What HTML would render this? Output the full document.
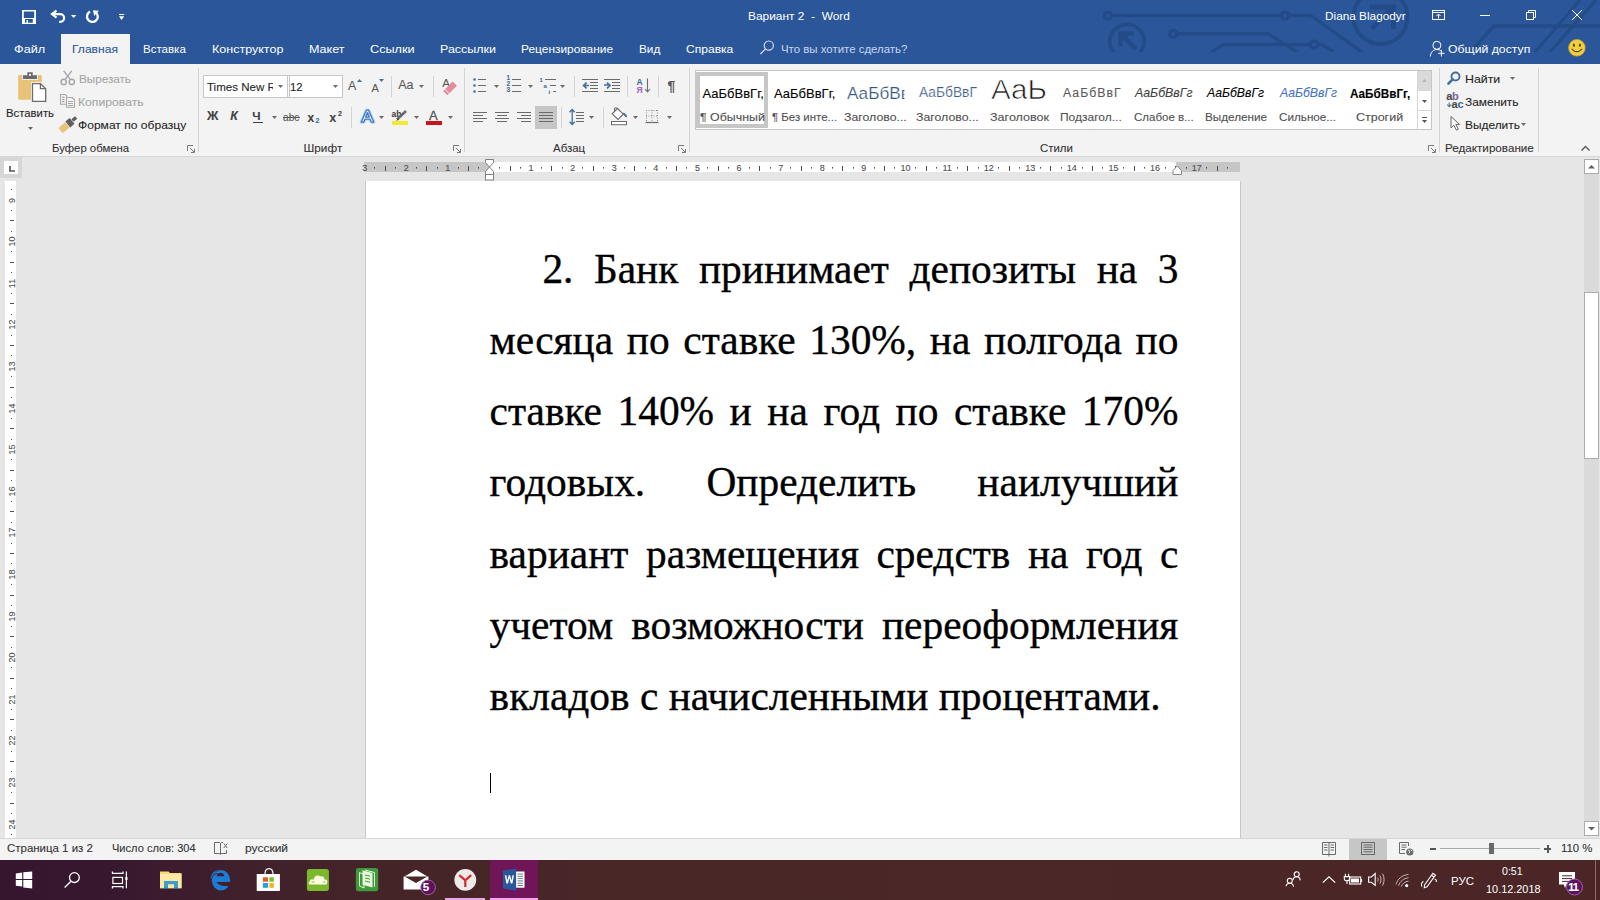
<!DOCTYPE html>
<html><head><meta charset="utf-8"><title>Word</title><style>
*{margin:0;padding:0;box-sizing:border-box}
html,body{width:1600px;height:900px;overflow:hidden;background:#e6e6e6;font-family:'Liberation Sans',sans-serif}
.b{position:absolute;display:block}
.t{position:absolute;white-space:pre;transform-origin:0 0;font-family:'Liberation Sans',sans-serif;-webkit-text-stroke:0.1px currentColor}

.doc{font-family:'Liberation Serif',serif;font-size:41.4px;color:#000;white-space:nowrap;-webkit-text-stroke:0.35px #000}
.ln{position:absolute;left:489.6px;width:688.8px;height:71px;line-height:71px;text-align:justify;text-align-last:justify;white-space:nowrap}
</style></head>
<body>
<div class="b" style="left:0px;top:0px;width:1600px;height:64px;background:#2b579a;"></div><div class="b" style="left:61px;top:34px;width:69px;height:30px;background:#f3f3f3;"></div><div class="b" style="left:0px;top:64px;width:1600px;height:92px;background:#f3f3f3;"></div><div class="b" style="left:0px;top:156px;width:1600px;height:1px;background:#d6d6d6;"></div><div class="b" style="left:0px;top:838px;width:1600px;height:1px;background:#d6d6d6;"></div><div class="b" style="left:0px;top:839px;width:1600px;height:21px;background:#f3f3f3;"></div><div class="b" style="left:0px;top:860px;width:1600px;height:40px;background:linear-gradient(90deg,#36162f 0%,#37172e 6%,#40202c 15%,#442428 22%,#4a2727 40%,#4c2627 100%);"></div><div class="b" style="left:365px;top:181px;width:876px;height:657px;background:#ffffff;border-left:1px solid #c8c8c8;border-right:1px solid #c8c8c8"></div><div class="ln doc" style="top:234.10px;padding-left:52.8px;">2. Банк принимает депозиты на 3</div><div class="ln doc" style="top:305.20px;padding-left:0px;">месяца по ставке 130%, на полгода по</div><div class="ln doc" style="top:376.30px;padding-left:0px;">ставке 140% и на год по ставке 170%</div><div class="ln doc" style="top:447.40px;padding-left:0px;">годовых. Определить наилучший</div><div class="ln doc" style="top:518.50px;padding-left:0px;">вариант размещения средств на год с</div><div class="ln doc" style="top:589.60px;padding-left:0px;">учетом возможности переоформления</div><div class="ln doc" style="top:660.70px;padding-left:0px;text-align:left;text-align-last:left;">вкладов с начисленными процентами.</div><div class="b" style="left:490px;top:773px;width:1px;height:20px;background:#000000;"></div><svg class="b" style="left:0px;top:0px;" width="1600" height="52" viewBox="0 0 1600 52"><g fill="none" stroke="#234b88" stroke-width="3.3">
<path d="M1111.2 15.5 H1281.5 M1288.5 15.5 H1308 Q1311 15.5 1313.5 17.3 L1362 52"/>
<circle cx="1107.7" cy="15.5" r="3.6"/><circle cx="1285" cy="15.5" r="3.6"/>
<path d="M1176.7 33.75 H1268 L1297 52"/><circle cx="1173.2" cy="33.75" r="3.6"/>
<path d="M1211.5 52 L1223.5 44.5 H1310.5 M1317.5 44.5 H1322 L1334 52"/><circle cx="1314" cy="44.5" r="3.6"/>
<path d="M1600 26 H1494 L1470 52"/>
<path d="M1535 52 L1580 0 M1550 52 L1596 0"/>
<circle cx="1127" cy="41.5" r="17.2" stroke-width="3.8"/>
<circle cx="1380.5" cy="17" r="27" stroke-width="4"/>
<path d="M1120.5 46 V33.5 H1134 M1121 34 L1136 49" stroke-width="4.6"/>
<path d="M1370 7 H1393.5 V29 M1393 7.5 L1372 28.5" stroke-width="5"/>
</g></svg><svg class="b" style="left:20px;top:8px;" width="110" height="18" viewBox="0 0 110 18"><g fill="#ffffff">
<path d="M2 2 H16 V16 H2 Z M3.8 3.4 V10 H14.2 V3.4 Z M5 11.1 V14.8 H6.5 V12 H8 V14.8 H12.8 V11.1 Z" fill-rule="evenodd"/>
</g>
<g fill="none" stroke="#ffffff" stroke-width="2.2">
<path d="M36.5 2.6 L32 6.1 L36.5 9.6"/>
<path d="M33 6.1 H40.2 A3.9 3.9 0 0 1 40.2 13.9 H39.2"/>
</g>
<path d="M70.1 3.6 A5.4 5.4 0 1 0 75.5 4.08" fill="none" stroke="#ffffff" stroke-width="2.3"/>
<g fill="#ffffff">
<path d="M73 2.2 L78.9 2.8 L74.2 8 Z"/>
<path d="M51 7 H56.3 L53.65 10 Z"/>
<path d="M99 6 H104.2 V7 H99 Z M99 8.3 H104.2 L101.6 12 Z"/>
</g></svg><svg class="b" style="left:758px;top:39px;" width="18" height="18" viewBox="0 0 18 18"><circle cx="10.8" cy="6.6" r="4.6" fill="none" stroke="#d0dcf0" stroke-width="1.2"/><path d="M7.5 9.9 L2.4 15" stroke="#d0dcf0" stroke-width="1.3"/></svg><svg class="b" style="left:1420px;top:0px;" width="180" height="64" viewBox="0 0 180 64"><g fill="none" stroke="#ffffff" stroke-width="1">
<rect x="12.5" y="10.5" width="12" height="9"/>
<path d="M12.5 12.5 H24.5 M18.5 18.5 V14.5 M16.5 16 L18.5 14 L20.5 16"/>
<path d="M60 15.5 H70"/>
<rect x="106.5" y="12.5" width="7" height="7"/>
<path d="M108.5 12.5 V10.5 H115.5 V17.5 H113.5"/>
<path d="M152 10 L162 20 M162 10 L152 20"/>
<circle cx="16.9" cy="45.3" r="4"/>
<path d="M10.3 56.5 C10.8 51.8 13.4 49.6 17 49.5 C18.5 49.5 19.8 49.9 20.8 50.6"/>
<path d="M21.4 50 V56.5 M18.2 53.3 H24.6"/>
</g>
<circle cx="156.9" cy="47.8" r="8.3" fill="#f2cf3f" stroke="#caa22a" stroke-width="0.8"/>
<g fill="#5a4a10"><ellipse cx="153.9" cy="45.2" rx="1.1" ry="1.6"/><ellipse cx="159.9" cy="45.2" rx="1.1" ry="1.6"/></g>
<path d="M151.6 48.8 Q156.9 54.5 162.2 48.8" fill="none" stroke="#5a4a10" stroke-width="1.1"/>
</svg><div class="b" style="left:198px;top:68px;width:1px;height:84px;background:#d4d4d4;"></div><div class="b" style="left:391px;top:76px;width:1px;height:21px;background:#d4d4d4;"></div><div class="b" style="left:351px;top:107px;width:1px;height:21px;background:#d4d4d4;"></div><div class="b" style="left:433px;top:76px;width:1px;height:21px;background:#d4d4d4;"></div><div class="b" style="left:464px;top:68px;width:1px;height:84px;background:#d4d4d4;"></div><div class="b" style="left:574px;top:76px;width:1px;height:21px;background:#d4d4d4;"></div><div class="b" style="left:627px;top:76px;width:1px;height:21px;background:#d4d4d4;"></div><div class="b" style="left:658px;top:76px;width:1px;height:21px;background:#d4d4d4;"></div><div class="b" style="left:561px;top:107px;width:1px;height:21px;background:#d4d4d4;"></div><div class="b" style="left:603px;top:107px;width:1px;height:21px;background:#d4d4d4;"></div><div class="b" style="left:689px;top:68px;width:1px;height:84px;background:#d4d4d4;"></div><div class="b" style="left:1439px;top:68px;width:1px;height:84px;background:#d4d4d4;"></div><div class="b" style="left:1538px;top:68px;width:1px;height:84px;background:#d4d4d4;"></div><svg class="b" style="left:187px;top:145px;" width="8" height="8" viewBox="0 0 8 8"><path d="M0.5 6 V0.5 H6" fill="none" stroke="#7a7a7a" stroke-width="1"/><path d="M3 3 L7 7 M7.5 4 V7.5 H4" fill="none" stroke="#7a7a7a" stroke-width="1"/></svg><svg class="b" style="left:453px;top:145px;" width="8" height="8" viewBox="0 0 8 8"><path d="M0.5 6 V0.5 H6" fill="none" stroke="#7a7a7a" stroke-width="1"/><path d="M3 3 L7 7 M7.5 4 V7.5 H4" fill="none" stroke="#7a7a7a" stroke-width="1"/></svg><svg class="b" style="left:678px;top:145px;" width="8" height="8" viewBox="0 0 8 8"><path d="M0.5 6 V0.5 H6" fill="none" stroke="#7a7a7a" stroke-width="1"/><path d="M3 3 L7 7 M7.5 4 V7.5 H4" fill="none" stroke="#7a7a7a" stroke-width="1"/></svg><svg class="b" style="left:1428px;top:145px;" width="8" height="8" viewBox="0 0 8 8"><path d="M0.5 6 V0.5 H6" fill="none" stroke="#7a7a7a" stroke-width="1"/><path d="M3 3 L7 7 M7.5 4 V7.5 H4" fill="none" stroke="#7a7a7a" stroke-width="1"/></svg><svg class="b" style="left:1580px;top:144px;" width="12" height="8" viewBox="0 0 12 8"><path d="M1.5 6.5 L5.5 2.5 L9.5 6.5" fill="none" stroke="#555" stroke-width="1.3"/></svg><svg class="b" style="left:16px;top:70px;" width="34" height="34" viewBox="0 0 34 34">
<rect x="2.2" y="4.9" width="23.6" height="24.9" rx="1" fill="#e8c277"/>
<rect x="6" y="4.3" width="15.9" height="5.6" fill="#f3f3f3"/>
<path d="M6.9 5.3 H11.3 V2.2 H16.7 V5.3 H20.9 V8.9 H6.9 Z" fill="#6b6b6b"/>
<circle cx="14" cy="4.9" r="1.1" fill="#f3f3f3"/>
<rect x="15" y="12.1" width="16.2" height="20.7" fill="#f3f3f3"/>
<path d="M16.5 13.6 H24.4 L29.7 18.7 V31.3 H16.5 Z" fill="#ffffff" stroke="#6b6b6b" stroke-width="1.3"/>
<path d="M24.4 13.6 V18.7 H29.7" fill="none" stroke="#6b6b6b" stroke-width="1.3"/>
</svg><svg class="b" style="left:28px;top:127px;" width="5" height="3" viewBox="0 0 5 3"><path d="M0 0 H5 L2.5 3 Z" fill="#6a6a6a"/></svg><svg class="b" style="left:58px;top:68px;" width="20" height="20" viewBox="0 0 20 20"><g fill="none" stroke="#a8a8a8" stroke-width="1.5">
<path d="M5.7 2.9 L12.5 11.6 M13.8 2.9 L7 11.6"/>
<circle cx="5.7" cy="13.9" r="2.6"/><circle cx="13.8" cy="13.9" r="2.6"/></g></svg><svg class="b" style="left:58px;top:92px;" width="20" height="18" viewBox="0 0 20 18"><g fill="none" stroke="#a8a8a8" stroke-width="1.1">
<path d="M2.5 2.5 H7.2 L8.6 3.9 V12.2 H2.5 Z"/>
<path d="M8.5 5.5 H14.2 L16.5 7.8 V15.2 H8.5 Z" fill="#f3f3f3"/>
<path d="M4 5.4 H6.5 M4 7.5 H6.5 M4 9.6 H6.5 M10 9.5 H15 M10 11.5 H15 M10 13.5 H15"/></g></svg><svg class="b" style="left:58px;top:113px;" width="20" height="20" viewBox="0 0 20 20"><g transform="rotate(-40 10 10)">
<path d="M-0.5 7.6 H8.4 V14.4 H-0.5 Z" fill="#e8c277"/>
<path d="M8.9 7.2 H14.4 V14.8 H8.9 Z" fill="#5f5f5f"/>
<path d="M15 9.3 H19.8 V12.7 H15 Z" fill="#5f5f5f"/>
</g></svg><div class="b" style="left:203px;top:75px;width:140px;height:23px;background:#ffffff;border:1px solid #c6c6c6"></div><div class="b" style="left:287px;top:76px;width:1px;height:21px;background:#c6c6c6;"></div><div class="b" style="left:288px;top:76px;width:1px;height:21px;background:#ffffff;"></div><div class="b" style="left:289px;top:76px;width:1px;height:21px;background:#c6c6c6;"></div><div class="b" style="left:274px;top:76px;width:12px;height:21px;background:#ffffff;"></div><svg class="b" style="left:278px;top:85px;" width="5" height="3" viewBox="0 0 5 3"><path d="M0 0 H5 L2.5 3 Z" fill="#6a6a6a"/></svg><svg class="b" style="left:333px;top:85px;" width="5" height="3" viewBox="0 0 5 3"><path d="M0 0 H5 L2.5 3 Z" fill="#6a6a6a"/></svg><div class="t" style="left:348.3px;top:79px;font-size:13px;line-height:13px;color:#595959;font-family:'Liberation Sans';transform:scaleX(0.95)">A</div><svg class="b" style="left:357px;top:79px;" width="6" height="3" viewBox="0 0 6 3"><path d="M0 3 H5 L2.5 0 Z" fill="#41719c"/></svg><div class="t" style="left:371.5px;top:82.5px;font-size:11px;line-height:11px;color:#595959;font-family:'Liberation Sans'">A</div><svg class="b" style="left:379px;top:79px;" width="5" height="3" viewBox="0 0 5 3"><path d="M0 0 H5 L2.5 3 Z" fill="#41719c"/></svg><div class="t" style="left:398.2px;top:79.4px;font-size:12.5px;line-height:12.5px;color:#595959;font-family:'Liberation Sans'">Aa</div><svg class="b" style="left:419px;top:85px;" width="5" height="3" viewBox="0 0 5 3"><path d="M0 0 H5 L2.5 3 Z" fill="#6a6a6a"/></svg><div class="t" style="left:442.3px;top:77.8px;font-size:11.5px;line-height:11.5px;color:#595959;font-family:'Liberation Sans'">A</div><svg class="b" style="left:443px;top:80px;" width="16" height="16" viewBox="0 0 16 16"><g transform="rotate(-45 8 8)"><rect x="3.2" y="4.6" width="10.5" height="6" fill="#e48b9c"/><rect x="0.3" y="4.6" width="2.2" height="6" fill="#e48b9c"/></g></svg><div class="t" style="left:206.9px;top:110.4px;font-size:12.3px;line-height:12.3px;color:#444;font-weight:bold;font-family:'Liberation Sans';transform:scaleX(1.02)">Ж</div><div class="t" style="left:230.2px;top:110.4px;font-size:12.3px;line-height:12.3px;color:#444;font-weight:bold;font-style:italic;font-family:'Liberation Sans'">К</div><div class="t" style="left:252.2px;top:110.9px;font-size:11.8px;line-height:11.8px;color:#444;font-weight:bold;font-family:'Liberation Sans'">Ч</div><div class="b" style="left:253px;top:122px;width:10px;height:1px;background:#444;"></div><svg class="b" style="left:272px;top:116px;" width="5" height="3" viewBox="0 0 5 3"><path d="M0 0 H5 L2.5 3 Z" fill="#6a6a6a"/></svg><div class="t" style="left:283.2px;top:111.5px;font-size:11px;line-height:11px;color:#555;font-family:'Liberation Sans';transform:scaleX(0.92)">abc</div><div class="b" style="left:283px;top:117px;width:17px;height:1px;background:#555;"></div><div class="t" style="left:307.5px;top:111.5px;font-size:12px;line-height:12px;color:#444;font-weight:bold;font-family:'Liberation Sans'">x</div><div class="t" style="left:315.5px;top:117px;font-size:7px;line-height:7px;color:#41719c;font-weight:bold;font-family:'Liberation Sans'">2</div><div class="t" style="left:329.5px;top:111.5px;font-size:12px;line-height:12px;color:#444;font-weight:bold;font-family:'Liberation Sans'">x</div><div class="t" style="left:338px;top:110px;font-size:7px;line-height:7px;color:#444;font-weight:bold;font-family:'Liberation Sans'">2</div><svg class="b" style="left:357px;top:107px;" width="20" height="19" viewBox="0 0 20 19"><path d="M4.2 15.2 L9.4 3.2 H11.6 L16.8 15.2 H14.3 L13.1 12.2 H7.9 L6.7 15.2 Z M8.7 10.1 H12.3 L10.5 5.6 Z" fill="#e6f0fa" fill-rule="evenodd" stroke="#bcd4ee" stroke-width="3.2" stroke-linejoin="round"/><path d="M4.2 15.2 L9.4 3.2 H11.6 L16.8 15.2 H14.3 L13.1 12.2 H7.9 L6.7 15.2 Z M8.7 10.1 H12.3 L10.5 5.6 Z" fill="#f4f8fd" fill-rule="evenodd" stroke="#3d78c0" stroke-width="1.3" stroke-linejoin="round"/></svg><svg class="b" style="left:379px;top:116px;" width="5" height="3" viewBox="0 0 5 3"><path d="M0 0 H5 L2.5 3 Z" fill="#6a6a6a"/></svg><div class="t" style="left:391.5px;top:109.5px;font-size:8.5px;line-height:8.5px;color:#444;font-weight:bold;font-family:'Liberation Sans'">ab</div><svg class="b" style="left:394px;top:109px;" width="16" height="13" viewBox="0 0 16 13"><path d="M3 10.5 L12 2" stroke="#6a6a6a" stroke-width="2.6"/><path d="M2 12 L4 9.5 L5 10.6 Z" fill="#333"/></svg><div class="b" style="left:392px;top:121px;width:16px;height:4px;background:#f2ea2c;"></div><svg class="b" style="left:414px;top:116px;" width="5" height="3" viewBox="0 0 5 3"><path d="M0 0 H5 L2.5 3 Z" fill="#6a6a6a"/></svg><div class="t" style="left:428.9px;top:109.4px;font-size:13px;line-height:13px;color:#555;font-family:'Liberation Sans';-webkit-text-stroke:0.3px #555">A</div><div class="b" style="left:426px;top:121px;width:16px;height:4px;background:#c8151b;"></div><svg class="b" style="left:448px;top:116px;" width="5" height="3" viewBox="0 0 5 3"><path d="M0 0 H5 L2.5 3 Z" fill="#6a6a6a"/></svg><svg class="b" style="left:473px;top:78px;" width="3" height="3" viewBox="0 0 3 3"><circle cx="1.5" cy="1.5" r="1.3" fill="#41719c"/></svg><div class="b" style="left:478px;top:79px;width:8px;height:1px;background:#6a6a6a;"></div><svg class="b" style="left:473px;top:84px;" width="3" height="3" viewBox="0 0 3 3"><circle cx="1.5" cy="1.5" r="1.3" fill="#41719c"/></svg><div class="b" style="left:478px;top:85px;width:8px;height:1px;background:#6a6a6a;"></div><svg class="b" style="left:473px;top:90px;" width="3" height="3" viewBox="0 0 3 3"><circle cx="1.5" cy="1.5" r="1.3" fill="#41719c"/></svg><div class="b" style="left:478px;top:91px;width:8px;height:1px;background:#6a6a6a;"></div><svg class="b" style="left:494px;top:85px;" width="5" height="3" viewBox="0 0 5 3"><path d="M0 0 H5 L2.5 3 Z" fill="#6a6a6a"/></svg><div class="t" style="left:506.5px;top:75px;font-size:6.5px;line-height:6.5px;color:#41719c;font-weight:bold;font-family:'Liberation Sans'">1</div><div class="b" style="left:512px;top:79px;width:9px;height:1px;background:#6a6a6a;"></div><div class="t" style="left:506.5px;top:81px;font-size:6.5px;line-height:6.5px;color:#41719c;font-weight:bold;font-family:'Liberation Sans'">2</div><div class="b" style="left:512px;top:85px;width:9px;height:1px;background:#6a6a6a;"></div><div class="t" style="left:506.5px;top:87px;font-size:6.5px;line-height:6.5px;color:#41719c;font-weight:bold;font-family:'Liberation Sans'">3</div><div class="b" style="left:512px;top:91px;width:9px;height:1px;background:#6a6a6a;"></div><svg class="b" style="left:528px;top:85px;" width="5" height="3" viewBox="0 0 5 3"><path d="M0 0 H5 L2.5 3 Z" fill="#6a6a6a"/></svg><div class="t" style="left:539.5px;top:77px;font-size:6px;line-height:6px;color:#41719c;font-weight:bold;font-family:'Liberation Sans'">1</div><div class="t" style="left:543.5px;top:82.5px;font-size:6px;line-height:6px;color:#41719c;font-weight:bold;font-family:'Liberation Sans'">a</div><div class="t" style="left:548.5px;top:88.5px;font-size:6px;line-height:6px;color:#41719c;font-weight:bold;font-family:'Liberation Sans'">i</div><div class="b" style="left:545px;top:79px;width:11px;height:1px;background:#6a6a6a;"></div><div class="b" style="left:550px;top:85px;width:6px;height:1px;background:#6a6a6a;"></div><div class="b" style="left:553px;top:91px;width:3px;height:1px;background:#6a6a6a;"></div><svg class="b" style="left:560px;top:85px;" width="5" height="3" viewBox="0 0 5 3"><path d="M0 0 H5 L2.5 3 Z" fill="#6a6a6a"/></svg><div class="b" style="left:582px;top:79px;width:16px;height:1px;background:#6a6a6a;"></div><div class="b" style="left:582px;top:91px;width:16px;height:1px;background:#6a6a6a;"></div><div class="b" style="left:590px;top:82px;width:8px;height:1px;background:#6a6a6a;"></div><div class="b" style="left:590px;top:85px;width:8px;height:1px;background:#6a6a6a;"></div><div class="b" style="left:590px;top:88px;width:8px;height:1px;background:#6a6a6a;"></div><svg class="b" style="left:582px;top:82px;" width="8" height="7" viewBox="0 0 8 7"><path d="M7 3.5 H2.5 M4.6 0.6 L1.6 3.5 L4.6 6.4" fill="none" stroke="#41719c" stroke-width="1.7"/></svg><div class="b" style="left:604px;top:79px;width:16px;height:1px;background:#6a6a6a;"></div><div class="b" style="left:604px;top:91px;width:16px;height:1px;background:#6a6a6a;"></div><div class="b" style="left:612px;top:82px;width:8px;height:1px;background:#6a6a6a;"></div><div class="b" style="left:612px;top:85px;width:8px;height:1px;background:#6a6a6a;"></div><div class="b" style="left:612px;top:88px;width:8px;height:1px;background:#6a6a6a;"></div><svg class="b" style="left:604px;top:82px;" width="8" height="7" viewBox="0 0 8 7"><path d="M0 3 H4.5 M3 0.6 L6 3.5 L3 6.4" fill="none" stroke="#41719c" stroke-width="1.7"/></svg><div class="t" style="left:636.5px;top:77.5px;font-size:8.5px;line-height:8.5px;color:#41719c;font-weight:bold;font-family:'Liberation Sans'">A</div><div class="t" style="left:636.5px;top:85.5px;font-size:8.5px;line-height:8.5px;color:#a566c9;font-weight:bold;font-family:'Liberation Sans'">Я</div><svg class="b" style="left:644px;top:78px;" width="8" height="16" viewBox="0 0 8 16"><path d="M3.5 0.5 V14 M1 11 L3.5 14 L6 11" fill="none" stroke="#6a6a6a" stroke-width="1.1"/></svg><div class="t" style="left:667.5px;top:79px;font-size:14px;line-height:14px;color:#595959;font-weight:bold;font-family:'Liberation Sans'">¶</div><div class="b" style="left:535px;top:106px;width:22px;height:23px;background:#c6c6c6;"></div><div class="b" style="left:473px;top:112px;width:14px;height:1px;background:#6a6a6a;"></div><div class="b" style="left:495px;top:112px;width:14px;height:1px;background:#6a6a6a;"></div><div class="b" style="left:517px;top:112px;width:14px;height:1px;background:#6a6a6a;"></div><div class="b" style="left:539px;top:112px;width:14px;height:1px;background:#6a6a6a;"></div><div class="b" style="left:473px;top:115px;width:10px;height:1px;background:#6a6a6a;"></div><div class="b" style="left:497px;top:115px;width:10px;height:1px;background:#6a6a6a;"></div><div class="b" style="left:521px;top:115px;width:10px;height:1px;background:#6a6a6a;"></div><div class="b" style="left:539px;top:115px;width:14px;height:1px;background:#6a6a6a;"></div><div class="b" style="left:473px;top:118px;width:14px;height:1px;background:#6a6a6a;"></div><div class="b" style="left:495px;top:118px;width:14px;height:1px;background:#6a6a6a;"></div><div class="b" style="left:517px;top:118px;width:14px;height:1px;background:#6a6a6a;"></div><div class="b" style="left:539px;top:118px;width:14px;height:1px;background:#6a6a6a;"></div><div class="b" style="left:473px;top:121px;width:10px;height:1px;background:#6a6a6a;"></div><div class="b" style="left:497px;top:121px;width:10px;height:1px;background:#6a6a6a;"></div><div class="b" style="left:521px;top:121px;width:10px;height:1px;background:#6a6a6a;"></div><div class="b" style="left:539px;top:121px;width:14px;height:1px;background:#6a6a6a;"></div><svg class="b" style="left:568px;top:108px;" width="9" height="19" viewBox="0 0 9 19"><path d="M4.2 1.5 V16.5 M1.6 4.3 L4.2 1.5 L6.8 4.3 M1.6 13.7 L4.2 16.5 L6.8 13.7" fill="none" stroke="#41719c" stroke-width="1.3"/></svg><div class="b" style="left:576px;top:112px;width:8px;height:1px;background:#6a6a6a;"></div><div class="b" style="left:576px;top:115px;width:8px;height:1px;background:#6a6a6a;"></div><div class="b" style="left:576px;top:118px;width:8px;height:1px;background:#6a6a6a;"></div><div class="b" style="left:576px;top:121px;width:8px;height:1px;background:#6a6a6a;"></div><svg class="b" style="left:589px;top:116px;" width="5" height="3" viewBox="0 0 5 3"><path d="M0 0 H5 L2.5 3 Z" fill="#6a6a6a"/></svg><svg class="b" style="left:609px;top:107px;" width="20" height="20" viewBox="0 0 20 20"><path d="M8.5 1.5 L14.3 7.2 L9 12.5 L3.2 6.8 Z" fill="#fff" stroke="#6a6a6a" stroke-width="1.1"/>
<path d="M5.5 4.3 V1 H8.5" fill="none" stroke="#6a6a6a" stroke-width="1"/>
<path d="M14.5 6 C16.5 6.5 17.5 8.5 17.5 10 C16 9.5 15 8.5 14.5 6 Z" fill="#41719c" stroke="#41719c" stroke-width="1"/>
<rect x="2.5" y="14.5" width="15" height="3.2" fill="#fff" stroke="#6a6a6a" stroke-width="1"/></svg><svg class="b" style="left:633px;top:116px;" width="5" height="3" viewBox="0 0 5 3"><path d="M0 0 H5 L2.5 3 Z" fill="#6a6a6a"/></svg><svg class="b" style="left:645px;top:109px;" width="15" height="15" viewBox="0 0 15 15"><path d="M1.5 1 V13 M7 1 V13 M12.5 1 V13 M1 1.5 H13 M1 7 H13" fill="none" stroke="#8a8a8a" stroke-width="1" stroke-dasharray="1 1.5"/>
<path d="M0.5 13.5 H13.5" stroke="#6a6a6a" stroke-width="1.2"/></svg><svg class="b" style="left:667px;top:116px;" width="5" height="3" viewBox="0 0 5 3"><path d="M0 0 H5 L2.5 3 Z" fill="#6a6a6a"/></svg><div class="b" style="left:695px;top:70px;width:737px;height:60px;background:#ffffff;border:1px solid #c6c6c6"></div><div class="b" style="left:696px;top:72px;width:72px;height:56px;background:transparent;border:4px solid #c6c6c6"></div><div class="b" style="left:1417px;top:71px;width:14px;height:58px;background:#ffffff;border-left:1px solid #d6d6d6"></div><div class="b" style="left:1418px;top:71px;width:13px;height:20px;background:#dadada;"></div><div class="b" style="left:1418px;top:110px;width:13px;height:1px;background:#d6d6d6;"></div><svg class="b" style="left:1422px;top:79px;" width="6" height="3" viewBox="0 0 6 3"><path d="M0 3 H5 L2.5 0 Z" fill="#b5b5b5"/></svg><svg class="b" style="left:1422px;top:100px;" width="5" height="3" viewBox="0 0 5 3"><path d="M0 0 H5 L2.5 3 Z" fill="#555"/></svg><div class="b" style="left:1422px;top:117px;width:5px;height:1px;background:#555;"></div><svg class="b" style="left:1422px;top:119.5px;" width="5" height="3" viewBox="0 0 5 3"><path d="M0 0 H5 L2.5 3 Z" fill="#555"/></svg><svg class="b" style="left:1445px;top:70px;" width="20" height="16" viewBox="0 0 20 16"><circle cx="10.5" cy="6.5" r="4" fill="none" stroke="#41719c" stroke-width="1.9"/><path d="M7.6 9.4 L3.4 13.6" stroke="#41719c" stroke-width="2.6" stroke-linecap="round"/></svg><svg class="b" style="left:1510px;top:77px;" width="5" height="3" viewBox="0 0 5 3"><path d="M0 0 H5 L2.5 3 Z" fill="#6a6a6a"/></svg><div class="t" style="left:1446.2px;top:91.2px;font-size:11px;line-height:11px;color:#4a4a4a;font-weight:bold;font-family:'Liberation Sans';letter-spacing:-0.3px"><span>a</span><span style="color:#7d62a0">b</span></div><div class="t" style="left:1451.6px;top:98.6px;font-size:11px;line-height:11px;color:#4a4a4a;font-weight:bold;font-family:'Liberation Sans';letter-spacing:-0.3px"><span>a</span><span style="color:#46698f">c</span></div><svg class="b" style="left:1446px;top:102px;" width="6" height="6" viewBox="0 0 6 6"><path d="M3.2 0.6 V4.4 M1.2 2.6 L3.2 4.6 L5.2 2.6" fill="none" stroke="#3f7f94" stroke-width="1.1"/></svg><svg class="b" style="left:1449px;top:115px;" width="13" height="17" viewBox="0 0 13 17"><path d="M2 1.5 V13 L4.8 10.2 L7.5 15.2 L9.3 14.2 L6.8 9.4 L10.5 9.4 Z" fill="#fff" stroke="#666" stroke-width="1"/></svg><svg class="b" style="left:1521px;top:123px;" width="5" height="3" viewBox="0 0 5 3"><path d="M0 0 H5 L2.5 3 Z" fill="#6a6a6a"/></svg><div class="b" style="left:364px;top:162px;width:876px;height:10px;background:#c6c6c6;"></div><div class="b" style="left:489px;top:162px;width:687px;height:10px;background:#ffffff;"></div><svg class="b" style="left:364px;top:162px;" width="876" height="10" viewBox="0 0 876 10"><rect x="10" y="5" width="1" height="1.6" fill="#4f4f4f"/><rect x="21" y="4" width="1" height="5" fill="#4f4f4f"/><rect x="31" y="5" width="1" height="1.6" fill="#4f4f4f"/><rect x="52" y="5" width="1" height="1.6" fill="#4f4f4f"/><rect x="62" y="4" width="1" height="5" fill="#4f4f4f"/><rect x="73" y="5" width="1" height="1.6" fill="#4f4f4f"/><rect x="94" y="5" width="1" height="1.6" fill="#4f4f4f"/><rect x="104" y="4" width="1" height="5" fill="#4f4f4f"/><rect x="114" y="5" width="1" height="1.6" fill="#4f4f4f"/><rect x="135" y="5" width="1" height="1.6" fill="#4f4f4f"/><rect x="146" y="4" width="1" height="5" fill="#4f4f4f"/><rect x="156" y="5" width="1" height="1.6" fill="#4f4f4f"/><rect x="177" y="5" width="1" height="1.6" fill="#4f4f4f"/><rect x="187" y="4" width="1" height="5" fill="#4f4f4f"/><rect x="198" y="5" width="1" height="1.6" fill="#4f4f4f"/><rect x="218" y="5" width="1" height="1.6" fill="#4f4f4f"/><rect x="229" y="4" width="1" height="5" fill="#4f4f4f"/><rect x="239" y="5" width="1" height="1.6" fill="#4f4f4f"/><rect x="260" y="5" width="1" height="1.6" fill="#4f4f4f"/><rect x="270" y="4" width="1" height="5" fill="#4f4f4f"/><rect x="281" y="5" width="1" height="1.6" fill="#4f4f4f"/><rect x="302" y="5" width="1" height="1.6" fill="#4f4f4f"/><rect x="312" y="4" width="1" height="5" fill="#4f4f4f"/><rect x="322" y="5" width="1" height="1.6" fill="#4f4f4f"/><rect x="343" y="5" width="1" height="1.6" fill="#4f4f4f"/><rect x="354" y="4" width="1" height="5" fill="#4f4f4f"/><rect x="364" y="5" width="1" height="1.6" fill="#4f4f4f"/><rect x="385" y="5" width="1" height="1.6" fill="#4f4f4f"/><rect x="395" y="4" width="1" height="5" fill="#4f4f4f"/><rect x="406" y="5" width="1" height="1.6" fill="#4f4f4f"/><rect x="426" y="5" width="1" height="1.6" fill="#4f4f4f"/><rect x="437" y="4" width="1" height="5" fill="#4f4f4f"/><rect x="447" y="5" width="1" height="1.6" fill="#4f4f4f"/><rect x="468" y="5" width="1" height="1.6" fill="#4f4f4f"/><rect x="478" y="4" width="1" height="5" fill="#4f4f4f"/><rect x="489" y="5" width="1" height="1.6" fill="#4f4f4f"/><rect x="510" y="5" width="1" height="1.6" fill="#4f4f4f"/><rect x="520" y="4" width="1" height="5" fill="#4f4f4f"/><rect x="530" y="5" width="1" height="1.6" fill="#4f4f4f"/><rect x="551" y="5" width="1" height="1.6" fill="#4f4f4f"/><rect x="562" y="4" width="1" height="5" fill="#4f4f4f"/><rect x="572" y="5" width="1" height="1.6" fill="#4f4f4f"/><rect x="593" y="5" width="1" height="1.6" fill="#4f4f4f"/><rect x="603" y="4" width="1" height="5" fill="#4f4f4f"/><rect x="614" y="5" width="1" height="1.6" fill="#4f4f4f"/><rect x="634" y="5" width="1" height="1.6" fill="#4f4f4f"/><rect x="645" y="4" width="1" height="5" fill="#4f4f4f"/><rect x="655" y="5" width="1" height="1.6" fill="#4f4f4f"/><rect x="676" y="5" width="1" height="1.6" fill="#4f4f4f"/><rect x="686" y="4" width="1" height="5" fill="#4f4f4f"/><rect x="697" y="5" width="1" height="1.6" fill="#4f4f4f"/><rect x="718" y="5" width="1" height="1.6" fill="#4f4f4f"/><rect x="728" y="4" width="1" height="5" fill="#4f4f4f"/><rect x="738" y="5" width="1" height="1.6" fill="#4f4f4f"/><rect x="759" y="5" width="1" height="1.6" fill="#4f4f4f"/><rect x="770" y="4" width="1" height="5" fill="#4f4f4f"/><rect x="780" y="5" width="1" height="1.6" fill="#4f4f4f"/><rect x="801" y="5" width="1" height="1.6" fill="#4f4f4f"/><rect x="811" y="4" width="1" height="5" fill="#4f4f4f"/><rect x="822" y="5" width="1" height="1.6" fill="#4f4f4f"/><rect x="842" y="5" width="1" height="1.6" fill="#4f4f4f"/><rect x="853" y="4" width="1" height="5" fill="#4f4f4f"/><rect x="863" y="5" width="1" height="1.6" fill="#4f4f4f"/></svg><div class="t" style="left:361.65px;top:164.1px;width:6px;text-align:center;font-size:9px;line-height:9px;color:#4f4f4f;font-family:'Liberation Sans',sans-serif">3</div><div class="t" style="left:403.25px;top:164.1px;width:6px;text-align:center;font-size:9px;line-height:9px;color:#4f4f4f;font-family:'Liberation Sans',sans-serif">2</div><div class="t" style="left:444.85px;top:164.1px;width:6px;text-align:center;font-size:9px;line-height:9px;color:#4f4f4f;font-family:'Liberation Sans',sans-serif">1</div><div class="t" style="left:528.05px;top:164.1px;width:6px;text-align:center;font-size:9px;line-height:9px;color:#4f4f4f;font-family:'Liberation Sans',sans-serif">1</div><div class="t" style="left:569.65px;top:164.1px;width:6px;text-align:center;font-size:9px;line-height:9px;color:#4f4f4f;font-family:'Liberation Sans',sans-serif">2</div><div class="t" style="left:611.25px;top:164.1px;width:6px;text-align:center;font-size:9px;line-height:9px;color:#4f4f4f;font-family:'Liberation Sans',sans-serif">3</div><div class="t" style="left:652.85px;top:164.1px;width:6px;text-align:center;font-size:9px;line-height:9px;color:#4f4f4f;font-family:'Liberation Sans',sans-serif">4</div><div class="t" style="left:694.45px;top:164.1px;width:6px;text-align:center;font-size:9px;line-height:9px;color:#4f4f4f;font-family:'Liberation Sans',sans-serif">5</div><div class="t" style="left:736.05px;top:164.1px;width:6px;text-align:center;font-size:9px;line-height:9px;color:#4f4f4f;font-family:'Liberation Sans',sans-serif">6</div><div class="t" style="left:777.65px;top:164.1px;width:6px;text-align:center;font-size:9px;line-height:9px;color:#4f4f4f;font-family:'Liberation Sans',sans-serif">7</div><div class="t" style="left:819.25px;top:164.1px;width:6px;text-align:center;font-size:9px;line-height:9px;color:#4f4f4f;font-family:'Liberation Sans',sans-serif">8</div><div class="t" style="left:860.85px;top:164.1px;width:6px;text-align:center;font-size:9px;line-height:9px;color:#4f4f4f;font-family:'Liberation Sans',sans-serif">9</div><div class="t" style="left:899.95px;top:164.1px;width:11px;text-align:center;font-size:9px;line-height:9px;color:#4f4f4f;font-family:'Liberation Sans',sans-serif">10</div><div class="t" style="left:941.55px;top:164.1px;width:11px;text-align:center;font-size:9px;line-height:9px;color:#4f4f4f;font-family:'Liberation Sans',sans-serif">11</div><div class="t" style="left:983.15px;top:164.1px;width:11px;text-align:center;font-size:9px;line-height:9px;color:#4f4f4f;font-family:'Liberation Sans',sans-serif">12</div><div class="t" style="left:1024.75px;top:164.1px;width:11px;text-align:center;font-size:9px;line-height:9px;color:#4f4f4f;font-family:'Liberation Sans',sans-serif">13</div><div class="t" style="left:1066.35px;top:164.1px;width:11px;text-align:center;font-size:9px;line-height:9px;color:#4f4f4f;font-family:'Liberation Sans',sans-serif">14</div><div class="t" style="left:1107.95px;top:164.1px;width:11px;text-align:center;font-size:9px;line-height:9px;color:#4f4f4f;font-family:'Liberation Sans',sans-serif">15</div><div class="t" style="left:1149.55px;top:164.1px;width:11px;text-align:center;font-size:9px;line-height:9px;color:#4f4f4f;font-family:'Liberation Sans',sans-serif">16</div><div class="t" style="left:1191.15px;top:164.1px;width:11px;text-align:center;font-size:9px;line-height:9px;color:#4f4f4f;font-family:'Liberation Sans',sans-serif">17</div><svg class="b" style="left:484px;top:158px;" width="11" height="24" viewBox="0 0 11 24"><g fill="#ffffff" stroke="#808080" stroke-width="1">
<path d="M1.5 1.5 H9.5 V4.5 L5.5 9 L9.5 13.5 V16.5 H1.5 V13.5 L5.5 9 L1.5 4.5 Z"/>
<rect x="1.5" y="16.5" width="8" height="5.5"/></g></svg><svg class="b" style="left:1172px;top:165px;" width="11" height="11" viewBox="0 0 11 11"><path d="M5.25 1 L9.5 5.5 V9.5 H1 V5.5 Z" fill="#fff" stroke="#8a8a8a" stroke-width="1"/></svg><div class="b" style="left:0px;top:157px;width:22px;height:21px;background:#d6d6d6;"></div><div class="b" style="left:4px;top:161px;width:14px;height:13px;background:#ffffff;"></div><svg class="b" style="left:4px;top:161px;" width="14" height="13" viewBox="0 0 14 13"><path d="M6 5 V10 H11" fill="none" stroke="#555" stroke-width="1.7"/></svg><div class="b" style="left:5px;top:181px;width:11px;height:657px;background:#ffffff;"></div><svg class="b" style="left:5px;top:181px;" width="11" height="657" viewBox="0 0 11 657"><rect x="6" y="8" width="1" height="1" fill="#4f4f4f"/><rect x="6" y="29" width="1" height="1" fill="#4f4f4f"/><rect x="5" y="39" width="4" height="1" fill="#4f4f4f"/><rect x="6" y="50" width="1" height="1" fill="#4f4f4f"/><rect x="6" y="70" width="1" height="1" fill="#4f4f4f"/><rect x="5" y="81" width="4" height="1" fill="#4f4f4f"/><rect x="6" y="91" width="1" height="1" fill="#4f4f4f"/><rect x="6" y="112" width="1" height="1" fill="#4f4f4f"/><rect x="5" y="122" width="4" height="1" fill="#4f4f4f"/><rect x="6" y="133" width="1" height="1" fill="#4f4f4f"/><rect x="6" y="154" width="1" height="1" fill="#4f4f4f"/><rect x="5" y="164" width="4" height="1" fill="#4f4f4f"/><rect x="6" y="174" width="1" height="1" fill="#4f4f4f"/><rect x="6" y="195" width="1" height="1" fill="#4f4f4f"/><rect x="5" y="206" width="4" height="1" fill="#4f4f4f"/><rect x="6" y="216" width="1" height="1" fill="#4f4f4f"/><rect x="6" y="237" width="1" height="1" fill="#4f4f4f"/><rect x="5" y="247" width="4" height="1" fill="#4f4f4f"/><rect x="6" y="258" width="1" height="1" fill="#4f4f4f"/><rect x="6" y="278" width="1" height="1" fill="#4f4f4f"/><rect x="5" y="289" width="4" height="1" fill="#4f4f4f"/><rect x="6" y="299" width="1" height="1" fill="#4f4f4f"/><rect x="6" y="320" width="1" height="1" fill="#4f4f4f"/><rect x="5" y="330" width="4" height="1" fill="#4f4f4f"/><rect x="6" y="341" width="1" height="1" fill="#4f4f4f"/><rect x="6" y="362" width="1" height="1" fill="#4f4f4f"/><rect x="5" y="372" width="4" height="1" fill="#4f4f4f"/><rect x="6" y="382" width="1" height="1" fill="#4f4f4f"/><rect x="6" y="403" width="1" height="1" fill="#4f4f4f"/><rect x="5" y="414" width="4" height="1" fill="#4f4f4f"/><rect x="6" y="424" width="1" height="1" fill="#4f4f4f"/><rect x="6" y="445" width="1" height="1" fill="#4f4f4f"/><rect x="5" y="455" width="4" height="1" fill="#4f4f4f"/><rect x="6" y="466" width="1" height="1" fill="#4f4f4f"/><rect x="6" y="486" width="1" height="1" fill="#4f4f4f"/><rect x="5" y="497" width="4" height="1" fill="#4f4f4f"/><rect x="6" y="507" width="1" height="1" fill="#4f4f4f"/><rect x="6" y="528" width="1" height="1" fill="#4f4f4f"/><rect x="5" y="538" width="4" height="1" fill="#4f4f4f"/><rect x="6" y="549" width="1" height="1" fill="#4f4f4f"/><rect x="6" y="570" width="1" height="1" fill="#4f4f4f"/><rect x="5" y="580" width="4" height="1" fill="#4f4f4f"/><rect x="6" y="590" width="1" height="1" fill="#4f4f4f"/><rect x="6" y="611" width="1" height="1" fill="#4f4f4f"/><rect x="5" y="622" width="4" height="1" fill="#4f4f4f"/><rect x="6" y="632" width="1" height="1" fill="#4f4f4f"/><rect x="6" y="653" width="1" height="1" fill="#4f4f4f"/></svg><div class="t" style="left:-3.20px;top:195.50px;width:30px;text-align:center;font-size:9px;line-height:9px;color:#4f4f4f;transform:rotate(-90deg);transform-origin:15px 4.5px;font-family:'Liberation Sans',sans-serif">9</div><div class="t" style="left:-3.20px;top:237.10px;width:30px;text-align:center;font-size:9px;line-height:9px;color:#4f4f4f;transform:rotate(-90deg);transform-origin:15px 4.5px;font-family:'Liberation Sans',sans-serif">10</div><div class="t" style="left:-3.20px;top:278.70px;width:30px;text-align:center;font-size:9px;line-height:9px;color:#4f4f4f;transform:rotate(-90deg);transform-origin:15px 4.5px;font-family:'Liberation Sans',sans-serif">11</div><div class="t" style="left:-3.20px;top:320.30px;width:30px;text-align:center;font-size:9px;line-height:9px;color:#4f4f4f;transform:rotate(-90deg);transform-origin:15px 4.5px;font-family:'Liberation Sans',sans-serif">12</div><div class="t" style="left:-3.20px;top:361.90px;width:30px;text-align:center;font-size:9px;line-height:9px;color:#4f4f4f;transform:rotate(-90deg);transform-origin:15px 4.5px;font-family:'Liberation Sans',sans-serif">13</div><div class="t" style="left:-3.20px;top:403.50px;width:30px;text-align:center;font-size:9px;line-height:9px;color:#4f4f4f;transform:rotate(-90deg);transform-origin:15px 4.5px;font-family:'Liberation Sans',sans-serif">14</div><div class="t" style="left:-3.20px;top:445.10px;width:30px;text-align:center;font-size:9px;line-height:9px;color:#4f4f4f;transform:rotate(-90deg);transform-origin:15px 4.5px;font-family:'Liberation Sans',sans-serif">15</div><div class="t" style="left:-3.20px;top:486.70px;width:30px;text-align:center;font-size:9px;line-height:9px;color:#4f4f4f;transform:rotate(-90deg);transform-origin:15px 4.5px;font-family:'Liberation Sans',sans-serif">16</div><div class="t" style="left:-3.20px;top:528.30px;width:30px;text-align:center;font-size:9px;line-height:9px;color:#4f4f4f;transform:rotate(-90deg);transform-origin:15px 4.5px;font-family:'Liberation Sans',sans-serif">17</div><div class="t" style="left:-3.20px;top:569.90px;width:30px;text-align:center;font-size:9px;line-height:9px;color:#4f4f4f;transform:rotate(-90deg);transform-origin:15px 4.5px;font-family:'Liberation Sans',sans-serif">18</div><div class="t" style="left:-3.20px;top:611.50px;width:30px;text-align:center;font-size:9px;line-height:9px;color:#4f4f4f;transform:rotate(-90deg);transform-origin:15px 4.5px;font-family:'Liberation Sans',sans-serif">19</div><div class="t" style="left:-3.20px;top:653.10px;width:30px;text-align:center;font-size:9px;line-height:9px;color:#4f4f4f;transform:rotate(-90deg);transform-origin:15px 4.5px;font-family:'Liberation Sans',sans-serif">20</div><div class="t" style="left:-3.20px;top:694.70px;width:30px;text-align:center;font-size:9px;line-height:9px;color:#4f4f4f;transform:rotate(-90deg);transform-origin:15px 4.5px;font-family:'Liberation Sans',sans-serif">21</div><div class="t" style="left:-3.20px;top:736.30px;width:30px;text-align:center;font-size:9px;line-height:9px;color:#4f4f4f;transform:rotate(-90deg);transform-origin:15px 4.5px;font-family:'Liberation Sans',sans-serif">22</div><div class="t" style="left:-3.20px;top:777.90px;width:30px;text-align:center;font-size:9px;line-height:9px;color:#4f4f4f;transform:rotate(-90deg);transform-origin:15px 4.5px;font-family:'Liberation Sans',sans-serif">23</div><div class="t" style="left:-3.20px;top:819.50px;width:30px;text-align:center;font-size:9px;line-height:9px;color:#4f4f4f;transform:rotate(-90deg);transform-origin:15px 4.5px;font-family:'Liberation Sans',sans-serif">24</div><div class="b" style="left:1584px;top:174px;width:15px;height:647px;background:#dadada;"></div><div class="b" style="left:1584px;top:159px;width:15px;height:15px;background:#ffffff;border:1px solid #ababab"></div><svg class="b" style="left:1584px;top:159px;" width="15" height="15" viewBox="0 0 15 15"><path d="M4 9.5 H11 L7.5 6 Z" fill="#606060"/></svg><div class="b" style="left:1584px;top:292px;width:15px;height:167px;background:#ffffff;border:1px solid #ababab"></div><div class="b" style="left:1584px;top:821px;width:15px;height:15px;background:#ffffff;border:1px solid #ababab"></div><svg class="b" style="left:1584px;top:821px;" width="15" height="15" viewBox="0 0 15 15"><path d="M4 6 H11 L7.5 9.5 Z" fill="#606060"/></svg><svg class="b" style="left:212px;top:841px;" width="18" height="15" viewBox="0 0 18 15"><g fill="none" stroke="#6a6a6a" stroke-width="1">
<path d="M2.5 1.5 H7 C8 1.5 8.5 2 8.5 3 V13.5 C8.5 12.8 8 12.5 7 12.5 H2.5 Z"/>
<path d="M8.5 3 C8.5 2 9 1.5 10 1.5 H11 M8.5 13.5 C8.5 12.8 9 12.5 10 12.5 H14.5 V9"/>
<path d="M11.8 2.5 L15.3 7 M15.3 2.5 L11.8 7"/></g></svg><div class="b" style="left:1349px;top:839px;width:38px;height:21px;background:#c6c6c6;"></div><svg class="b" style="left:1321px;top:840px;" width="18" height="17" viewBox="0 0 18 17"><g fill="none" stroke="#6a6a6a" stroke-width="1">
<path d="M1.5 2.5 H8 V14.5 H1.5 Z M8 2.5 H14.5 V14.5 H8"/>
<path d="M3 5 H6.5 M3 7.5 H6.5 M3 10 H6.5 M9.5 5 H13 M9.5 7.5 H13 M9.5 10 H13"/></g><path d="M8 14 V16.5" stroke="#6a6a6a"/></svg><svg class="b" style="left:1360px;top:841px;" width="16" height="15" viewBox="0 0 16 15"><g fill="none" stroke="#6a6a6a" stroke-width="1"><rect x="1.5" y="1.5" width="13" height="12"/>
<path d="M3.5 4 H12.5 M3.5 6.2 H12.5 M3.5 8.5 H12.5 M3.5 10.8 H12.5"/></g></svg><svg class="b" style="left:1398px;top:841px;" width="17" height="16" viewBox="0 0 17 16"><g fill="none" stroke="#6a6a6a" stroke-width="1"><path d="M10.5 5 V1.5 H1.5 V12.5 H7"/>
<path d="M3.5 4 H8.5 M3.5 6.2 H8.5 M3.5 8.5 H7"/></g><circle cx="11.8" cy="11" r="3.6" fill="#6a6a6a"/><path d="M10 9 L12 10 L11 12.5 M13 8.5 L14 10" stroke="#f3f3f3" stroke-width="0.9" fill="none"/></svg><div class="b" style="left:1430px;top:848px;width:6px;height:2px;background:#555;"></div><div class="b" style="left:1440px;top:848px;width:100px;height:1px;background:#a8a8a8;"></div><div class="b" style="left:1489px;top:843px;width:5px;height:11px;background:#6a6a6a;"></div><div class="b" style="left:1544px;top:848px;width:7px;height:2px;background:#555;"></div><div class="b" style="left:1546.5px;top:845px;width:2px;height:8px;background:#555;"></div><div class="b" style="left:490px;top:860px;width:48px;height:40px;background:#701558;"></div><div class="b" style="left:445px;top:898px;width:40px;height:2px;background:#e8a6e8;"></div><div class="b" style="left:490px;top:898px;width:48px;height:2px;background:#f2a8f0;"></div><div class="b" style="left:1595px;top:860px;width:1px;height:40px;background:#8a6a70;"></div><svg class="b" style="left:15px;top:871px;" width="18" height="18" viewBox="0 0 18 18"><g fill="#ffffff"><path d="M0.8 2.4 L7.2 1.5 V8 H0.8 Z"/><path d="M8.3 1.35 L17.2 0.6 V8 H8.3 Z"/><path d="M0.8 9 H7.2 V15.6 L0.8 14.8 Z"/><path d="M8.3 9 H17.2 V17.4 L8.3 16.6 Z"/></g></svg><svg class="b" style="left:62px;top:870px;" width="20" height="20" viewBox="0 0 20 20"><circle cx="12.4" cy="7.6" r="4.9" fill="none" stroke="#ffffff" stroke-width="1.3"/><path d="M8.8 11.4 L2.6 17.4" stroke="#ffffff" stroke-width="1.4"/></svg><svg class="b" style="left:110px;top:870px;" width="20" height="20" viewBox="0 0 20 20"><g fill="none" stroke="#ffffff" stroke-width="1.2">
<rect x="2.9" y="7.4" width="9.6" height="6.1"/>
<path d="M2.4 1.6 V3.3 H13 V1.6 M2.4 18.4 V16.6 H13 V18.4 M16.4 1.6 V18.2"/></g>
<rect x="15.4" y="7" width="2.1" height="3" fill="#ffffff"/></svg><svg class="b" style="left:158px;top:869px;" width="26" height="22" viewBox="0 0 26 22"><path d="M2 2.5 H10.5 L12 4 H23.5 V19.2 H2 Z" fill="#f8d775"/>
<path d="M2 5 H23.5 V19.2 H2 Z" fill="#fde8a6"/>
<path d="M6 12 H20 V19.8 H16 V15.2 H10 V19.8 H6 Z" fill="#3c9fcf"/>
<path d="M6 18.8 H10 V19.8 H6 Z M16 18.8 H20 V19.8 H16 Z" fill="#1f6fa3"/></svg><svg class="b" style="left:205px;top:865px;" width="30" height="30" viewBox="0 0 30 30"><ellipse cx="16" cy="15.2" rx="9.2" ry="10.3" fill="#1c7cd5"/>
<path d="M11.6 11.2 C12 8.8 13.8 7.8 15.6 7.8 C17.6 7.8 19.2 9 19.2 11.2 Z" fill="#3f1f2c"/>
<path d="M11.4 16.9 H26 V20.4 C21.5 21.6 14.5 21.4 11.4 16.9 Z" fill="#3f1f2c"/>
<rect x="23.2" y="19.8" width="3.5" height="7" fill="#3f1f2c"/>
<path d="M5.5 13.5 C6.2 9 9 5.6 13 4.6 C10 6.4 8 9.6 7.2 13.2 Z" fill="#2a72c4"/>
<path d="M6.3 12.6 C7.5 10.2 9.8 8.8 12.5 8.6" fill="none" stroke="#3f1f2c" stroke-width="0.9"/></svg><svg class="b" style="left:255px;top:866px;" width="27" height="27" viewBox="0 0 27 27"><path d="M10 8 C10 4.5 11.3 2.6 14 2.6 C16.7 2.6 18 4.5 18 8" fill="none" stroke="#fff" stroke-width="1.2"/>
<path d="M1.7 8 H24.9 V24.5 C24.9 24.8 24.7 25 24.4 25 H2.2 C1.9 25 1.7 24.8 1.7 24.5 Z" fill="#fff"/>
<rect x="7.9" y="11.3" width="5.2" height="4.4" fill="#e05c2b"/><rect x="14.4" y="11.3" width="4.4" height="4.4" fill="#7db928"/>
<rect x="7.9" y="17" width="5.2" height="4.8" fill="#22a2e0"/><rect x="14.4" y="17" width="4.4" height="4.8" fill="#f1b51e"/></svg><svg class="b" style="left:306px;top:868px;" width="24" height="24" viewBox="0 0 24 24"><rect x="0.9" y="1" width="22" height="22" rx="2.5" fill="#7cb82f"/>
<path d="M4 16.5 C2.4 16.5 2 14 3.8 13.4 C4 11.2 6.5 10.5 7.6 11.8 C8 8 12 6.5 14.5 8.5 C16.5 7.6 18.8 9.3 18.3 11.5 C20.5 11 22 13 21 15 C21 16 20.3 16.5 19.5 16.5 Z" fill="#fdfbe0"/>
<path d="M6 14.5 C6.5 13 8.5 13.5 7.8 15 M17 14.5 C17.5 13 19.5 13.5 18.8 15" fill="none" stroke="#7cb82f" stroke-width="0.9"/></svg><svg class="b" style="left:355px;top:867px;" width="24" height="25" viewBox="0 0 24 25"><rect x="0.9" y="1" width="22.3" height="23.3" rx="2.5" fill="#3e9b3c"/>
<path d="M4.5 5.5 V19 L9 21 V7.5 Z" fill="none" stroke="#e6f6d8" stroke-width="1"/>
<path d="M7.5 3.2 L17.5 6 V20.5 L7.5 17.8 Z" fill="#e9f7dc"/>
<path d="M10 3 L19.5 5.5 V19.8" fill="none" stroke="#e9f7dc" stroke-width="1"/>
<path d="M10 8 L15 9.2 M10 11 L15 12.2 M10 14 L15 15.2" stroke="#3e9b3c" stroke-width="1"/></svg><svg class="b" style="left:402px;top:868px;" width="36" height="30" viewBox="0 0 36 30"><path d="M1.6 9 L14 1.8 L26.4 9 V21.4 H1.6 Z" fill="#fff"/>
<path d="M2.5 8.6 H25.5 L14 15 Z" fill="#4a2627"/>
<path d="M1.6 9 L14 16.2 L26.4 9" fill="none" stroke="#fff" stroke-width="0.9"/>
<circle cx="26.1" cy="19.4" r="7.3" fill="#5e1160" stroke="#a36aa6" stroke-width="0.9"/></svg><div class="t" style="left:422.8px;top:881.5px;font-size:11.5px;line-height:11.5px;color:#fff;font-weight:bold;font-family:'Liberation Sans'">5</div><svg class="b" style="left:453px;top:868px;" width="25" height="24" viewBox="0 0 25 24"><circle cx="12.3" cy="11.9" r="10.9" fill="#efeaea"/>
<path d="M6.3 7.2 L12.3 12.3 L18.2 7.2 M12.3 12.3 V19" fill="none" stroke="#d12a2a" stroke-width="2.2"/></svg><svg class="b" style="left:500px;top:866px;" width="28" height="27" viewBox="0 0 28 27"><path d="M16 5.5 H24.5 V21.7 H16 Z" fill="#fff"/>
<path d="M17.5 8 H23 M17.5 10.3 H23 M17.5 12.6 H23 M17.5 14.9 H23 M17.5 17.2 H23 M17.5 19.5 H23" stroke="#5b6a80" stroke-width="0.9"/>
<path d="M2.9 4.6 L16.1 2.5 V24.8 L2.9 22.6 Z" fill="#2b579a"/>
<path d="M4.8 9.2 L6.4 17.5 H8 L9.4 11.8 L10.8 17.5 H12.4 L14 9.2 H12.5 L11.5 14.6 L10.1 9.2 H8.7 L7.3 14.6 L6.3 9.2 Z" fill="#fff"/></svg><svg class="b" style="left:1284px;top:871px;" width="18" height="18" viewBox="0 0 18 18"><g fill="none" stroke="#ffffff" stroke-width="1.1">
<circle cx="12.7" cy="3.3" r="2.5"/><path d="M9 9 C9.3 6.8 10.8 5.8 12.7 5.8 C14.6 5.8 16 7 16.2 9.4"/>
<circle cx="5.8" cy="9.7" r="2.5"/><path d="M2 15.3 C2.3 13.1 3.8 12.2 5.8 12.2 C7.8 12.2 9.3 13.3 9.5 15.6"/></g></svg><svg class="b" style="left:1321px;top:875px;" width="16" height="10" viewBox="0 0 16 10"><path d="M1.8 7.6 L8 1.8 L14.2 7.6" fill="none" stroke="#ffffff" stroke-width="1.2"/></svg><svg class="b" style="left:1343px;top:872px;" width="20" height="14" viewBox="0 0 20 14"><g fill="none" stroke="#ffffff" stroke-width="1.1">
<path d="M2.4 1.8 V4.4 M5.6 1.8 V4.4 M1.3 4.6 H6.7 V6.5 C6.7 8 5.6 8.8 4 8.8 C2.4 8.8 1.3 8 1.3 6.5 Z M4 8.8 V12"/>
<rect x="6.7" y="5" width="11" height="7"/></g><rect x="8" y="6.5" width="8" height="4" fill="#ffffff"/><rect x="17.8" y="7" width="1.3" height="3" fill="#ffffff"/></svg><svg class="b" style="left:1367px;top:872px;" width="20" height="16" viewBox="0 0 20 16"><g fill="none" stroke="#ffffff" stroke-width="1.1">
<path d="M1.6 5 H4.4 L8.2 1.6 V13.4 L4.4 10.3 H1.6 Z"/></g>
<g fill="none" stroke="#d8c0c4" stroke-width="1"><path d="M10.4 5.6 C11.3 6.4 11.3 8.7 10.4 9.5"/><path d="M12.8 3.6 C14.4 5.2 14.4 10 12.8 11.6"/><path d="M15.3 1.6 C17.6 4.2 17.6 11 15.3 13.6"/></g></svg><svg class="b" style="left:1395px;top:872px;" width="15" height="16" viewBox="0 0 15 16"><g fill="none" stroke="#c9b0b4" stroke-width="1">
<path d="M1 12.5 C2.5 7 7 3.2 13.5 2.4"/><path d="M3.6 13.8 C4.8 9.4 8.5 6.3 13.5 5.8"/><path d="M6.3 14.5 C7.2 11.8 9.8 9.6 13.5 9.2"/></g>
<circle cx="11.7" cy="13.6" r="1.6" fill="#fff"/></svg><svg class="b" style="left:1420px;top:871px;" width="19" height="18" viewBox="0 0 19 18"><g fill="none" stroke="#ffffff" stroke-width="1.1">
<path d="M4.5 14 L13 2.2 L15.5 4 L7 15.8 L4.3 16.8 Z"/><path d="M11.5 4.2 L14 6"/>
<path d="M3.5 10.5 C1.8 11.2 1.2 13.3 1.7 15.5 M14.6 8.2 C16.5 8.4 17 9.8 15.8 10.8"/></g></svg><svg class="b" style="left:1557px;top:870px;" width="22" height="22" viewBox="0 0 22 22"><path d="M2 2 H18 V14.5 H9.5 L8 18 L6.7 14.5 H2 Z" fill="#ffffff"/>
<path d="M5 5.8 H15 M5 8.6 H15 M5 11.4 H12" stroke="#4c2627" stroke-width="1"/></svg><svg class="b" style="left:1565px;top:878px;" width="20" height="20" viewBox="0 0 20 20"><circle cx="9.5" cy="9" r="8" fill="#5e1160" stroke="#a36aa6" stroke-width="0.9"/></svg><div class="t" style="left:1568.3px;top:881.8px;font-size:11px;line-height:11px;color:#fff;font-weight:bold;letter-spacing:-1px;font-family:'Liberation Sans'">11</div>
<div class="t" style="left:747.99px;top:11.00px;font-size:11.8px;line-height:11.8px;color:#ffffff;transform:scaleX(1.0101);-webkit-text-stroke:0;">Вариант 2  -  Word</div>
<div class="t" style="left:1325.00px;top:11.00px;font-size:11.8px;line-height:11.8px;color:#ffffff;-webkit-text-stroke:0;">Diana Blagodyr</div>
<div class="t" style="left:13.93px;top:44.00px;font-size:11.8px;line-height:11.8px;color:#ffffff;transform:scaleX(1.0741);-webkit-text-stroke:0;">Файл</div>
<div class="t" style="left:71.98px;top:44.00px;font-size:11.8px;line-height:11.8px;color:#2b579a;transform:scaleX(1.0233);">Главная</div>
<div class="t" style="left:143.02px;top:44.00px;font-size:11.8px;line-height:11.8px;color:#ffffff;transform:scaleX(0.9767);-webkit-text-stroke:0;">Вставка</div>
<div class="t" style="left:211.94px;top:44.00px;font-size:11.8px;line-height:11.8px;color:#ffffff;transform:scaleX(1.0606);-webkit-text-stroke:0;">Конструктор</div>
<div class="t" style="left:308.94px;top:44.00px;font-size:11.8px;line-height:11.8px;color:#ffffff;transform:scaleX(1.0625);-webkit-text-stroke:0;">Макет</div>
<div class="t" style="left:369.93px;top:44.00px;font-size:11.8px;line-height:11.8px;color:#ffffff;transform:scaleX(1.0750);-webkit-text-stroke:0;">Ссылки</div>
<div class="t" style="left:439.94px;top:44.00px;font-size:11.8px;line-height:11.8px;color:#ffffff;transform:scaleX(1.0588);-webkit-text-stroke:0;">Рассылки</div>
<div class="t" style="left:520.99px;top:44.00px;font-size:11.8px;line-height:11.8px;color:#ffffff;transform:scaleX(1.0111);-webkit-text-stroke:0;">Рецензирование</div>
<div class="t" style="left:639.00px;top:44.00px;font-size:11.8px;line-height:11.8px;color:#ffffff;-webkit-text-stroke:0;">Вид</div>
<div class="t" style="left:685.98px;top:44.00px;font-size:11.8px;line-height:11.8px;color:#ffffff;transform:scaleX(1.0222);-webkit-text-stroke:0;">Справка</div>
<div class="t" style="left:781.03px;top:44.00px;font-size:11.8px;line-height:11.8px;color:#c8d6ee;transform:scaleX(0.9690);-webkit-text-stroke:0;">Что вы хотите сделать?</div>
<div class="t" style="left:1447.96px;top:44.00px;font-size:11.8px;line-height:11.8px;color:#ffffff;transform:scaleX(1.0385);-webkit-text-stroke:0;">Общий доступ</div>
<div class="t" style="left:5.54px;top:108.00px;font-size:11.8px;line-height:11.8px;color:#262626;transform:scaleX(0.9592);">Вставить</div>
<div class="t" style="left:78.51px;top:74.00px;font-size:11.8px;line-height:11.8px;color:#a6a6a6;transform:scaleX(0.9902);">Вырезать</div>
<div class="t" style="left:78.47px;top:97.00px;font-size:11.8px;line-height:11.8px;color:#a6a6a6;transform:scaleX(1.0323);">Копировать</div>
<div class="t" style="left:78.48px;top:120.00px;font-size:11.8px;line-height:11.8px;color:#262626;transform:scaleX(1.0238);">Формат по образцу</div>
<div class="t" style="left:51.54px;top:143.00px;font-size:11.8px;line-height:11.8px;color:#333333;transform:scaleX(0.9620);">Буфер обмена</div>
<div class="t" style="left:303.50px;top:143.00px;font-size:11.8px;line-height:11.8px;color:#333333;">Шрифт</div>
<div class="t" style="left:553.00px;top:143.00px;font-size:11.8px;line-height:11.8px;color:#333333;transform:scaleX(0.9697);">Абзац</div>
<div class="t" style="left:1039.53px;top:143.00px;font-size:11.8px;line-height:11.8px;color:#333333;transform:scaleX(0.9688);">Стили</div>
<div class="t" style="left:1444.51px;top:143.00px;font-size:11.8px;line-height:11.8px;color:#333333;transform:scaleX(0.9886);">Редактирование</div>
<div class="t" style="left:1464.95px;top:74.00px;font-size:11.8px;line-height:11.8px;color:#262626;transform:scaleX(1.0469);">Найти</div>
<div class="t" style="left:1464.99px;top:97.00px;font-size:11.8px;line-height:11.8px;color:#262626;transform:scaleX(1.0096);">Заменить</div>
<div class="t" style="left:1464.99px;top:120.00px;font-size:11.8px;line-height:11.8px;color:#262626;transform:scaleX(1.0094);">Выделить</div>
<div class="t" style="left:207.00px;top:82.00px;font-size:11.8px;line-height:11.8px;color:#262626;transform:scaleX(0.9786);clip-path:inset(0 3px 0 0)">Times New R</div>
<div class="t" style="left:290.04px;top:82.00px;font-size:11.8px;line-height:11.8px;color:#262626;transform:scaleX(0.9583);">12</div>
<div class="t" style="left:700.00px;top:112.00px;font-size:11.8px;line-height:11.8px;color:#505050;transform:scaleX(1.0492);">¶ Обычный</div>
<div class="t" style="left:772.00px;top:112.00px;font-size:11.8px;line-height:11.8px;color:#505050;transform:scaleX(0.9697);">¶ Без инте...</div>
<div class="t" style="left:843.96px;top:112.00px;font-size:11.8px;line-height:11.8px;color:#505050;transform:scaleX(1.0431);">Заголово...</div>
<div class="t" style="left:915.96px;top:112.00px;font-size:11.8px;line-height:11.8px;color:#505050;transform:scaleX(1.0431);">Заголово...</div>
<div class="t" style="left:989.94px;top:112.00px;font-size:11.8px;line-height:11.8px;color:#505050;transform:scaleX(1.0648);">Заголовок</div>
<div class="t" style="left:1059.98px;top:112.00px;font-size:11.8px;line-height:11.8px;color:#505050;transform:scaleX(1.0169);">Подзагол...</div>
<div class="t" style="left:1133.53px;top:112.00px;font-size:11.8px;line-height:11.8px;color:#505050;transform:scaleX(0.9746);">Слабое в...</div>
<div class="t" style="left:1204.51px;top:112.00px;font-size:11.8px;line-height:11.8px;color:#505050;transform:scaleX(0.9918);">Выделение</div>
<div class="t" style="left:1278.51px;top:112.00px;font-size:11.8px;line-height:11.8px;color:#505050;transform:scaleX(0.9911);">Сильное...</div>
<div class="t" style="left:1355.94px;top:112.00px;font-size:11.8px;line-height:11.8px;color:#505050;transform:scaleX(1.0581);">Строгий</div>
<div class="t" style="left:702.50px;top:86.50px;font-size:13px;line-height:13px;color:#000000;">АаБбВвГг,</div>
<div class="t" style="left:774.00px;top:86.50px;font-size:13px;line-height:13px;color:#000000;">АаБбВвГг,</div>
<div class="t" style="left:847.00px;top:84.50px;font-size:17px;line-height:17px;color:#34557f;transform:scaleX(1.0081);clip-path:inset(0 5.2px 0 0);-webkit-text-stroke:0.22px #ffffff">АаБбВв</div>
<div class="t" style="left:919.00px;top:84.50px;font-size:14px;line-height:14px;color:#3c5d88;transform:scaleX(0.9831);-webkit-text-stroke:0.18px #ffffff">АаБбВвГ</div>
<div class="t" style="left:991.00px;top:75.50px;font-size:28px;line-height:28px;color:#1a1a1a;transform:scaleX(1.0577);-webkit-text-stroke:0.7px #ffffff">АаЬ</div>
<div class="t" style="left:1062.50px;top:86.50px;font-size:12.5px;line-height:12.5px;color:#5a5a5a;transform:scaleX(0.9831);letter-spacing:1px">АаБбВвГ</div>
<div class="t" style="left:1134.50px;top:85.50px;font-size:13px;line-height:13px;color:#404040;transform:scaleX(0.9508);font-style:italic">АаБбВвГг</div>
<div class="t" style="left:1207.00px;top:85.50px;font-size:13px;line-height:13px;color:#000000;transform:scaleX(0.9426);font-style:italic">АаБбВвГг</div>
<div class="t" style="left:1279.50px;top:85.50px;font-size:13px;line-height:13px;color:#4472c4;transform:scaleX(0.9426);font-style:italic">АаБбВвГг</div>
<div class="t" style="left:1350.00px;top:86.50px;font-size:13px;line-height:13px;color:#000000;transform:scaleX(0.9015);font-weight:bold">АаБбВвГг,</div>
<div class="t" style="left:7.28px;top:843.00px;font-size:11.8px;line-height:11.8px;color:#333333;transform:scaleX(0.9713);">Страница 1 из 2</div>
<div class="t" style="left:111.56px;top:843.00px;font-size:11.8px;line-height:11.8px;color:#333333;transform:scaleX(0.9375);">Число слов: 304</div>
<div class="t" style="left:245.28px;top:843.00px;font-size:11.8px;line-height:11.8px;color:#333333;transform:scaleX(1.0171);">русский</div>
<div class="t" style="left:1561.03px;top:843.00px;font-size:11.8px;line-height:11.8px;color:#333333;transform:scaleX(0.9677);">110 %</div>
<div class="t" style="left:1450.83px;top:875.50px;font-size:11.8px;line-height:11.8px;color:#ffffff;transform:scaleX(0.9727);-webkit-text-stroke:0;">РУС</div>
<div class="t" style="left:1502.40px;top:866.00px;font-size:11.8px;line-height:11.8px;color:#ffffff;transform:scaleX(0.8957);-webkit-text-stroke:0;">0:51</div>
<div class="t" style="left:1486.48px;top:884.00px;font-size:11.8px;line-height:11.8px;color:#ffffff;transform:scaleX(0.9241);-webkit-text-stroke:0;">10.12.2018</div>
</body></html>
